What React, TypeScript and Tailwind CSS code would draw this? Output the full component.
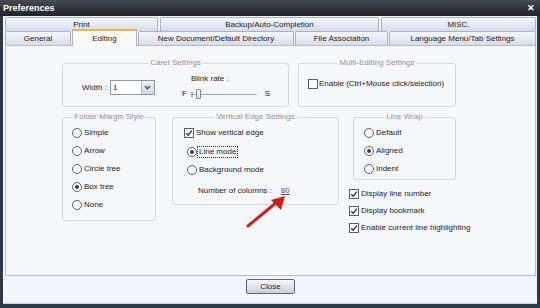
import React from "react";

function Check({ checked }: { checked?: boolean }) {
  return (
    <span className="w-[10px] h-[10px] shrink-0 border border-[#5a5f66] bg-[#fbfcfd] flex items-center justify-center">
      {checked && (
        <svg width="8" height="8" viewBox="0 0 8 8">
          <path d="M1.2 4.2 L3.2 6.2 L6.9 1.6" fill="none" stroke="#2b3a2b" strokeWidth="1.3" />
        </svg>
      )}
    </span>
  );
}

function Radio({ on }: { on?: boolean }) {
  return (
    <span className="w-[10px] h-[10px] shrink-0 rounded-full border border-[#5a5f66] bg-[#fbfcfd] flex items-center justify-center">
      {on && <span className="w-[4px] h-[4px] rounded-full bg-[#3a3d42]" />}
    </span>
  );
}

function Group({
  title,
  className,
  children,
}: {
  title: string;
  className: string;
  children?: React.ReactNode;
}) {
  return (
    <div className={"relative shrink-0 border border-[#d3d8df] rounded-[3px] " + className}>
      <span className="absolute -top-[6px] left-1/2 -translate-x-1/2 px-[2px] bg-[#f5f7fa] text-[#8e9399] leading-[10px] whitespace-nowrap">
        {title}
      </span>
      {children}
    </div>
  );
}

function Tab({ label, w, selected }: { label: string; w: string; selected?: boolean }) {
  if (selected) {
    return (
      <div
        className={
          "relative z-10 -mt-[2px] -mb-[1px] h-[17px] shrink-0 flex items-center justify-center border-x border-[#aab3c2] border-t-2 border-t-[#f0b446] bg-[#f7f9fb] text-[#1a1a1a] " +
          w
        }
      >
        {label}
      </div>
    );
  }
  return (
    <div
      className={
        "h-full shrink-0 flex items-center justify-center rounded-t-[2px] border border-b-0 border-[#a9b2c2] bg-gradient-to-b from-[#f5f7fb] to-[#d6dde9] text-[#1a1a1a] whitespace-nowrap " +
        w
      }
    >
      {label}
    </div>
  );
}

export default function App() {
  return (
    <div className="w-[540px] h-[308px] bg-[#2f3644] flex flex-col font-['Liberation_Sans',Arial,sans-serif] text-[8px] leading-[10px] text-[#1c1c1c] overflow-hidden">
      {/* title bar */}
      <div className="h-[16px] shrink-0 flex items-center justify-between pl-[3px] pr-[5px] bg-gradient-to-b from-[#454a53] to-[#202329]">
        <span className="text-white font-bold text-[9px] leading-[10px]">Preferences</span>
        <span className="text-white font-bold text-[9px] leading-[10px]">✕</span>
      </div>

      {/* body */}
      <div className="flex-1 mx-[3px] mb-[4px] bg-[#f1f4f8] flex flex-col pl-[2px] pr-[1px] border-b border-[#c9ced6]">
        {/* tab row 1 */}
        <div className="mt-[1px] h-[14px] flex gap-[2px]">
          <Tab label="Print" w="w-[153px]" />
          <Tab label="Backup/Auto-Completion" w="w-[219px]" />
          <Tab label="MISC." w="w-[155px]" />
        </div>
        {/* tab row 2 */}
        <div className="h-[14px] flex gap-[1px]">
          <Tab label="General" w="w-[66px]" />
          <Tab label="Editing" w="w-[65px]" selected />
          <Tab label="New Document/Default Directory" w="w-[156px]" />
          <Tab label="File Association" w="w-[93px]" />
          <Tab label="Language Menu/Tab Settings" w="w-[147px]" />
        </div>

        {/* panel */}
        <div className="relative h-[231px] shrink-0 bg-[#f5f7fa] border border-[#b4bcc9] pl-[56px] pt-[17px]">
          {/* row 1 */}
          <div className="flex">
            <Group title="Caret Settings" className="w-[227px] h-[44px] flex pl-[19px]">
              <div className="mt-[16px] h-[15px] flex items-center">
                <span>Width :</span>
                <div className="ml-[3px] w-[45px] h-[15px] border border-[#8d97a8] bg-white flex items-center">
                  <span className="flex-1 pl-[2px]">1</span>
                  <span className="w-[13px] h-[13px] border-l border-[#aab4c4] bg-gradient-to-b from-[#eef2f8] to-[#cfd8e6] flex items-center justify-center">
                    <svg width="7" height="5" viewBox="0 0 7 5">
                      <path d="M0.8 1 L3.5 3.8 L6.2 1" fill="none" stroke="#3a4a66" strokeWidth="1.4" />
                    </svg>
                  </span>
                </div>
              </div>
              <div className="ml-[27px] mt-[10px] flex flex-col">
                <span className="pl-[9px]">Blink rate :</span>
                <div className="mt-[4px] h-[12px] flex items-center">
                  <span>F</span>
                  <div className="relative ml-[4px] w-[66px] h-[1px] bg-[#a3a8b0]">
                    <span className="absolute left-0 -top-[2px] w-[2px] h-[5px] bg-[#a3a8b0]" />
                    <span className="absolute left-[5px] -top-[5px] w-[5px] h-[10px] border border-[#7e848d] rounded-[1px] bg-gradient-to-b from-[#ffffff] to-[#dde2e9]" />
                  </div>
                  <span className="ml-[8px]">S</span>
                </div>
              </div>
            </Group>
            <Group title="Multi-Editing Settings" className="ml-[9px] w-[158px] h-[44px] pl-[9px] pt-[15px]">
              <div className="flex items-center gap-[1px]">
                <Check />
                <span>Enable (Ctrl+Mouse click/selection)</span>
              </div>
            </Group>
          </div>

          {/* row 2 */}
          <div className="mt-[10px] flex items-start">
            <Group title="Folder Margin Style" className="w-[94px] h-[104px] pl-[9px] pt-[10px] flex flex-col gap-[8px]">
              {[
                ["Simple", false],
                ["Arrow", false],
                ["Circle tree", false],
                ["Box tree", true],
                ["None", false],
              ].map(([l, on]) => (
                <div key={l as string} className="h-[10px] flex items-center gap-[2px]">
                  <Radio on={on as boolean} />
                  <span>{l as string}</span>
                </div>
              ))}
            </Group>

            <Group title="Vertical Edge Settings" className="ml-[16px] w-[167px] h-[88px] pl-[11px] pt-[10px] flex flex-col">
              <div className="h-[10px] flex items-center gap-[2px]">
                <Check checked />
                <span>Show vertical edge</span>
              </div>
              <div className="mt-[9px] ml-[3px] h-[10px] flex items-center gap-[1px]">
                <Radio on />
                <span className="outline outline-1 outline-dotted outline-[#333] px-[1px]">Line mode</span>
              </div>
              <div className="mt-[8px] ml-[3px] h-[10px] flex items-center gap-[2px]">
                <Radio />
                <span>Background mode</span>
              </div>
              <div className="mt-[11px] ml-[14px] flex">
                <span>Number of columns :</span>
                <span className="ml-[9px] underline text-[#3f5478]">80</span>
              </div>
            </Group>

            <div className="ml-[10px] flex flex-col">
              <Group title="Line Wrap" className="ml-[4px] w-[103px] h-[63px] pl-[10px] pt-[10px] flex flex-col gap-[8px]">
                {[
                  ["Default", false],
                  ["Aligned", true],
                  ["Indent", false],
                ].map(([l, on]) => (
                  <div key={l as string} className="h-[10px] flex items-center gap-[2px]">
                    <Radio on={on as boolean} />
                    <span>{l as string}</span>
                  </div>
                ))}
              </Group>
              <div className="mt-[9px] flex flex-col gap-[7px]">
                {["Display line number", "Display bookmark", "Enable current line highlighting"].map((l) => (
                  <div key={l} className="h-[10px] flex items-center gap-[2px] whitespace-nowrap">
                    <Check checked />
                    <span>{l}</span>
                  </div>
                ))}
              </div>
            </div>
          </div>

          {/* red arrow annotation */}
          <svg
            className="absolute left-[235px] top-[147px] pointer-events-none"
            width="50"
            height="40"
            viewBox="0 0 50 40"
          >
            <path d="M7 33 L36 9" stroke="#d41c1c" strokeWidth="3" strokeLinecap="round" fill="none" />
            <polygon points="44,3 30,7 40,17" fill="#d41c1c" />
          </svg>
        </div>

        {/* bottom */}
        <div className="flex-1 flex justify-center pt-[3px]">
          <button className="w-[49px] h-[15px] border border-[#5d6574] rounded-[2px] bg-gradient-to-b from-[#f7f8fb] to-[#c8d0de] text-[8px] leading-[10px] text-[#1c1c1c] font-['Liberation_Sans',Arial,sans-serif]">
            Close
          </button>
        </div>
      </div>
    </div>
  );
}
